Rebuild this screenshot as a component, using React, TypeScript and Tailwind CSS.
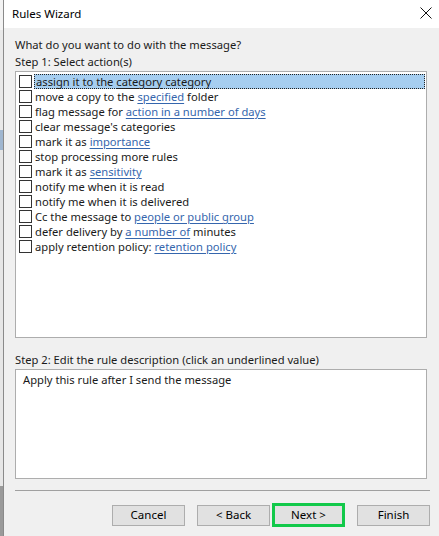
import React from "react";

type Part = { t: string; link?: boolean };

const actions: Part[][] = [
  [{ t: "assign it to the " }, { t: "category", link: true }, { t: " category" }],
  [{ t: "move a copy to the " }, { t: "specified", link: true }, { t: " folder" }],
  [{ t: "flag message for " }, { t: "action in a number of days", link: true }],
  [{ t: "clear message's categories" }],
  [{ t: "mark it as " }, { t: "importance", link: true }],
  [{ t: "stop processing more rules" }],
  [{ t: "mark it as " }, { t: "sensitivity", link: true }],
  [{ t: "notify me when it is read" }],
  [{ t: "notify me when it is delivered" }],
  [{ t: "Cc the message to " }, { t: "people or public group", link: true }],
  [{ t: "defer delivery by " }, { t: "a number of", link: true }, { t: " minutes" }],
  [{ t: "apply retention policy: " }, { t: "retention policy", link: true }],
];

function ActionRow({ parts, selected }: { parts: Part[]; selected?: boolean }) {
  return (
    <div className="flex items-center h-[15px]">
      <div className="w-[13px] h-[13px] border border-[#333333] bg-white ml-[3px] shrink-0" />
      <div
        className={
          selected
            ? "ml-[2px] flex-1 h-[15px] bg-[#a6cef0] border border-dotted border-[#222] pl-[1px] leading-[13px] mr-[1px]"
            : "ml-[3px] flex-1 h-[15px] leading-[15px]"
        }
      >
        {parts.map((p, i) =>
          p.link ? (
            <span
              key={i}
              className={
                selected
                  ? "underline underline-offset-2 decoration-[#222]"
                  : "underline underline-offset-2 text-[#3566ad] decoration-[#3566ad]"
              }
            >
              {p.t}
            </span>
          ) : (
            <span key={i}>{p.t}</span>
          )
        )}
      </div>
    </div>
  );
}

function Button({ label, focus }: { label: string; focus?: boolean }) {
  return (
    <div
      className={
        focus
          ? "w-[73px] h-[24px] bg-[#e1e1e1] border-[3px] border-[#12c94a] flex items-center justify-center text-[11.5px] text-black"
          : "w-[73px] h-[21px] bg-[#e1e1e1] border border-[#adadad] flex items-center justify-center text-[11.5px] text-black"
      }
    >
      {label}
    </div>
  );
}

export default function App() {
  return (
    <div
      className="w-[439px] h-[536px] flex bg-[#f0f0f0] text-[11.2px] text-[#1a1a1a] overflow-hidden"
      style={{ fontFamily: '"Noto Sans", "Open Sans", sans-serif' }}
    >
      {/* sliver of the window behind */}
      <div className="w-[3px] flex flex-col bg-[#d9d9d9]">
        <div className="h-[30px] bg-[#f3f3f3]" />
        <div className="h-[100px] bg-[#e8e8e8]" />
        <div className="h-[20px] bg-[#9fb6d0]" />
        <div className="flex-1 bg-[#e6e6e6]" />
        <div className="h-[50px] bg-[#9a9a9a]" />
      </div>
      <div className="flex-1 flex flex-col border-l border-[#8a8a8a]">
        <div className="h-[28px] bg-white flex items-center justify-between pl-[8px] pr-[7px]">
          <span className="text-[11.5px] text-black">Rules Wizard</span>
          <svg width="12" height="12" viewBox="0 0 12 12" className="mb-[2px]">
            <path d="M0.5 0.5 L11.5 11.5 M11.5 0.5 L0.5 11.5" stroke="#111" strokeWidth="1" />
          </svg>
        </div>
        <div className="flex-1 flex flex-col pl-[11px] pr-[8px] pt-[9px]">
          <div className="leading-[16px]">What do you want to do with the message?</div>
          <div className="leading-[16px] mt-[1px]">Step 1: Select action(s)</div>
          <div className="mt-[1px] w-[412px] h-[267px] bg-white border border-[#adadad] pt-[2px]">
            {actions.map((a, i) => (
              <ActionRow key={i} parts={a} selected={i === 0} />
            ))}
          </div>
          <div className="leading-[16px] mt-[14px]">
            Step 2: Edit the rule description (click an underlined value)
          </div>
          <div className="mt-[1px] w-[412px] h-[110px] bg-white border border-[#adadad] pl-[7px] pt-[2px] leading-[16px]">
            Apply this rule after I send the message
          </div>
          <div className="mt-[11px] h-[1px] w-[415px] bg-[#a0a0a0]" />
          <div className="mt-[12px] h-[24px] flex items-center pl-[97px]">
            <Button label="Cancel" />
            <div className="ml-[12px]">
              <Button label="< Back" />
            </div>
            <div className="ml-[2px]">
              <Button label="Next >" focus />
            </div>
            <div className="ml-[12px]">
              <Button label="Finish" />
            </div>
          </div>
        </div>
      </div>
    </div>
  );
}
